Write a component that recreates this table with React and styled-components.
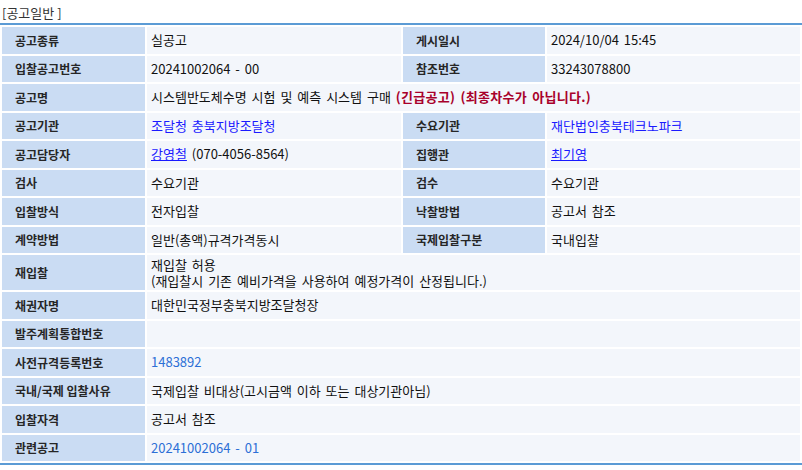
import React from 'react'
import styled, { createGlobalStyle } from 'styled-components'

const Global = createGlobalStyle`
  body {
    margin: 0;
    background: #ffffff;
    font-family: "Noto Sans CJK KR", "Liberation Sans", sans-serif;
    font-size: 12px;
    color: #111;
  }
`

const Wrap = styled.div`
  width: 802px;
  padding-top: 4px;
`

const Title = styled.h3`
  margin: 0 0 2px 2px;
  font-size: 13px;
  font-weight: 400;
  color: #333;
  line-height: 17px;
`

const Table = styled.table`
  width: 802px;
  border-collapse: separate;
  border-spacing: 2px 2px;
  border-top: 2px solid #5b9bd5;
  border-bottom: 2px solid #5b9bd5;
  table-layout: fixed;
`

const Th = styled.th`
  background: #cadcf3;
  color: #262626;
  font-weight: 700;
  text-align: left;
  padding: 0 0 0 13px;
  height: ${p => (p.$tall ? '35px' : '26.5px')};
  font-size: 12px;
`

const Td = styled.td`
  background: #f3f6fb;
  padding: 0 0 0 4px;
  height: ${p => (p.$tall ? '35px' : '26.5px')};
  line-height: 16px;
  font-size: 13px;
  word-spacing: 2px;
  color: #111;
`

const Link = styled.a`
  color: ${p => (p.$soft ? '#2c6fd6' : '#1a1aff')};
  text-decoration: ${p => (p.$under ? 'underline' : 'none')};
`

const Urgent = styled.b`
  color: #a8002a;
  font-weight: 700;
  letter-spacing: 0.3px;
`

const rows = [
  ['공고종류', '실공고', '게시일시', '2024/10/04 15:45'],
  ['입찰공고번호', '20241002064 - 00', '참조번호', '33243078800'],
]

export default function App() {
  return (
    <Wrap>
      <Global />
      <Title>[공고일반 ]</Title>
      <Table>
        <colgroup>
          <col style={{ width: '143px' }} />
          <col style={{ width: '254px' }} />
          <col style={{ width: '142px' }} />
          <col style={{ width: '253px' }} />
        </colgroup>
        <tbody>
          {rows.map(r => (
            <tr key={r[0]}>
              <Th>{r[0]}</Th>
              <Td>{r[1]}</Td>
              <Th>{r[2]}</Th>
              <Td>{r[3]}</Td>
            </tr>
          ))}
          <tr>
            <Th>공고명</Th>
            <Td colSpan={3}>
              시스템반도체수명 시험 및 예측 시스템 구매 <Urgent>(긴급공고) (최종차수가 아닙니다.)</Urgent>
            </Td>
          </tr>
          <tr>
            <Th>공고기관</Th>
            <Td><Link href="#">조달청 충북지방조달청</Link></Td>
            <Th>수요기관</Th>
            <Td><Link href="#">재단법인충북테크노파크</Link></Td>
          </tr>
          <tr>
            <Th>공고담당자</Th>
            <Td><Link href="#" $under>강영철</Link> (070-4056-8564)</Td>
            <Th>집행관</Th>
            <Td><Link href="#" $under>최기영</Link></Td>
          </tr>
          <tr>
            <Th>검사</Th>
            <Td>수요기관</Td>
            <Th>검수</Th>
            <Td>수요기관</Td>
          </tr>
          <tr>
            <Th>입찰방식</Th>
            <Td>전자입찰</Td>
            <Th>낙찰방법</Th>
            <Td>공고서 참조</Td>
          </tr>
          <tr>
            <Th>계약방법</Th>
            <Td>일반(총액)규격가격동시</Td>
            <Th>국제입찰구분</Th>
            <Td>국내입찰</Td>
          </tr>
          <tr>
            <Th $tall>재입찰</Th>
            <Td $tall colSpan={3}>
              재입찰 허용<br />
              (재입찰시 기존 예비가격을 사용하여 예정가격이 산정됩니다.)
            </Td>
          </tr>
          <tr>
            <Th>채권자명</Th>
            <Td colSpan={3}>대한민국정부충북지방조달청장</Td>
          </tr>
          <tr>
            <Th>발주계획통합번호</Th>
            <Td colSpan={3}></Td>
          </tr>
          <tr>
            <Th>사전규격등록번호</Th>
            <Td colSpan={3}><Link href="#" $soft>1483892</Link></Td>
          </tr>
          <tr>
            <Th>국내/국제 입찰사유</Th>
            <Td colSpan={3}>국제입찰 비대상(고시금액 이하 또는 대상기관아님)</Td>
          </tr>
          <tr>
            <Th>입찰자격</Th>
            <Td colSpan={3}>공고서 참조</Td>
          </tr>
          <tr>
            <Th>관련공고</Th>
            <Td colSpan={3}><Link href="#" $soft>20241002064 - 01</Link></Td>
          </tr>
        </tbody>
      </Table>
    </Wrap>
  )
}
